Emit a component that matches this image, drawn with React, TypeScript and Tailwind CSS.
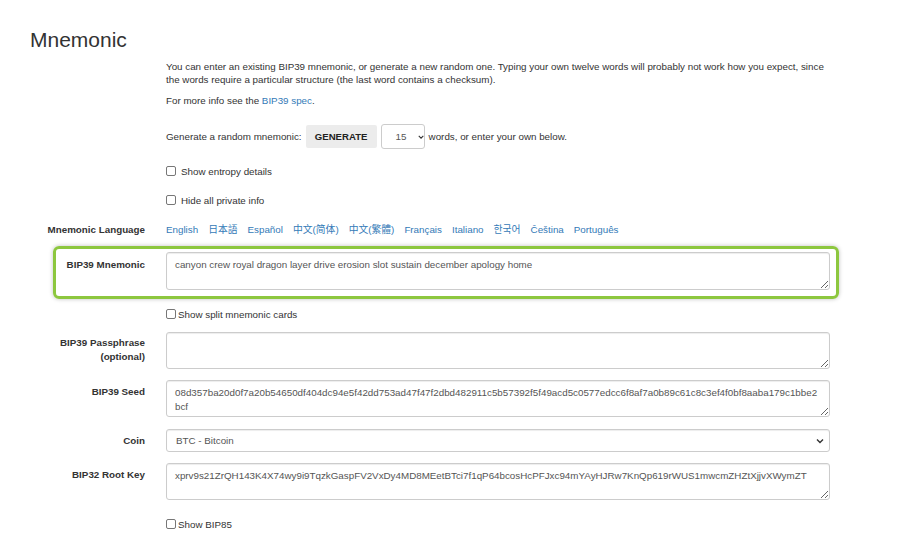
//
// BIP39 mnemonic form section.
//

const languages = [
  "English",
  "日本語",
  "Español",
  "中文(简体)",
  "中文(繁體)",
  "Français",
  "Italiano",
  "한국어",
  "Čeština",
  "Português",
];

const SEED =
  "08d357ba20d0f7a20b54650df404dc94e5f42dd753ad47f47f2dbd482911c5b57392f5f49acd5c0577edcc6f8af7a0b89c61c8c3ef4f0bf8aaba179c1bbe2\nbcf";
const ROOT_KEY =
  "xprv9s21ZrQH143K4X74wy9i9TqzkGaspFV2VxDy4MD8MEetBTci7f1qP64bcosHcPFJxc94mYAyHJRw7KnQp619rWUS1mwcmZHZtXjjvXWymZT";

function Chevron() {
  return (
    <svg width="8" height="6" viewBox="0 0 8 6" className="text-[#333]">
      <path d="M1 1.5 L4 4.5 L7 1.5" fill="none" stroke="currentColor" strokeWidth="1.4" />
    </svg>
  );
}

function Check({ label, gap = "gap-[5px]" }: { label: string; gap?: string }) {
  return (
    <label className={`flex items-center ${gap} h-[13px]`}>
      <span className="w-[10px] h-[10px] rounded-[2px] border border-[#777] bg-white" />
      <span>{label}</span>
    </label>
  );
}

function Area({ value, h = "h-[38px]" }: { value: string; h?: string }) {
  return (
    <textarea
      readOnly
      value={value}
      className={`block w-[664px] ${h} border border-[#ccc] rounded-[3px] px-[8px] pt-[4.5px] text-[9.8px] leading-[14px] text-[#555] shadow-[inset_0_1px_1px_rgba(0,0,0,0.075)] outline-none`}
    />
  );
}

function Row({ label, children, mt }: { label: React.ReactNode; children: React.ReactNode; mt: string }) {
  return (
    <div className={`flex ${mt}`}>
      <div className="w-[145px] text-right font-bold pt-[5px]">{label}</div>
      <div className="ml-[21px]">{children}</div>
    </div>
  );
}

export default function App() {
  return (
    <div className="w-[900px] h-[547px] overflow-hidden bg-white text-[#333] text-[9.8px] leading-[13px] font-['Liberation_Sans',Arial,sans-serif]">
      {/* 标题 */}
      <h2 className="pt-[28px] pl-[30px] text-[21px] leading-[24px]">Mnemonic</h2>

      {/* 说明文字与生成控件 */}
      <div className="ml-[166px] w-[670px]">
        <p className="mt-[7.5px]">
          You can enter an existing BIP39 mnemonic, or generate a new random one. Typing your own twelve words will
          probably not work how you expect, since the words require a particular structure (the last word contains a
          checksum).
        </p>
        <p className="mt-[8px]">
          For more info see the <span className="text-[#337ab7]">BIP39 spec</span>.
        </p>

        <div className="flex items-center h-[23px] mt-[18.5px]">
          <span>Generate a random mnemonic:</span>
          <button className="ml-[4px] h-[23px] w-[71px] bg-[#ececec] rounded-[2px] font-bold text-[9.6px] text-[#222]">
            GENERATE
          </button>
          <div className="ml-[4px] h-[25px] w-[44px] border border-[#ccc] rounded-[3px] flex items-center pl-[14px] gap-[11px]">
            <span className="text-[#555]">15</span>
            <Chevron />
          </div>
          <span className="ml-[4px]">words, or enter your own below.</span>
        </div>

        <div className="mt-[16.5px]">
          <Check label="Show entropy details" />
        </div>
        <div className="mt-[16px]">
          <Check label="Hide all private info" />
        </div>
      </div>

      {/* 语言选择 */}
      <div className="flex mt-[16px]">
        <div className="w-[145px] text-right font-bold">Mnemonic Language</div>
        <div className="ml-[21px] flex gap-[10px] text-[#337ab7] font-['Liberation_Sans','Noto_Sans_CJK_SC',sans-serif]">
          {languages.map((l) => (
            <span key={l}>{l}</span>
          ))}
        </div>
      </div>

      {/* 高亮的助记词输入 */}
      <div className="ml-[53px] mt-[10.5px] w-[786px] border-[3px] border-[#8dc73f] rounded-[6px] shadow-[0_0_4px_rgba(0,0,0,0.25)] flex pt-[3px] pb-[6px]">
        <div className="w-[89px] text-right font-bold pt-[5.5px]">BIP39 Mnemonic</div>
        <div className="ml-[21px]">
          <Area value="canyon crew royal dragon layer drive erosion slot sustain december apology home" />
        </div>
      </div>

      <div className="ml-[166px] mt-[8.5px]">
        <Check label="Show split mnemonic cards" gap="gap-[2px]" />
      </div>

      <Row
        mt="mt-[11.5px]"
        label={
          <div className="leading-[14px] -mt-[1px]">
            BIP39 Passphrase
            <br />
            (optional)
          </div>
        }
      >
        <Area value="" h="h-[37px]" />
      </Row>

      <Row mt="mt-[11px]" label="BIP39 Seed">
        <Area value={SEED} h="h-[37px]" />
      </Row>

      <Row mt="mt-[12px]" label="Coin">
        <div className="w-[664px] h-[23px] border border-[#ccc] rounded-[3px] flex items-center justify-between pl-[9px] pr-[5px] text-[#555] shadow-[inset_0_1px_1px_rgba(0,0,0,0.075)]">
          <span>BTC - Bitcoin</span>
          <Chevron />
        </div>
      </Row>

      <Row mt="mt-[11px]" label="BIP32 Root Key">
        <Area value={ROOT_KEY} h="h-[37px]" />
      </Row>

      <div className="ml-[166px] mt-[17.5px]">
        <Check label="Show BIP85" gap="gap-[2px]" />
      </div>
    </div>
  );
}
